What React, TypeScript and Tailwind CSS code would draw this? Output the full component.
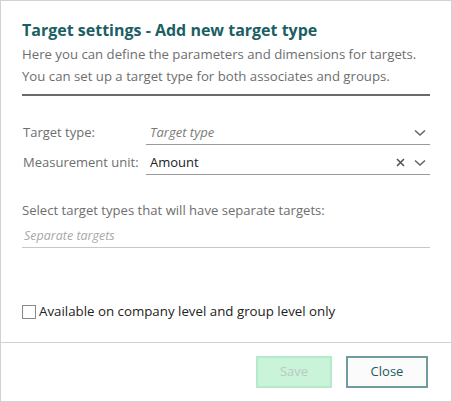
import React from "react";

function Chevron() {
  return (
    <svg width="12" height="8" viewBox="0 0 12 8" fill="none">
      <path d="M1 1.5 L6 6 L11 1.5" stroke="#666" strokeWidth="1.6" />
    </svg>
  );
}

function Cross() {
  return (
    <svg width="9" height="9" viewBox="0 0 9 9" fill="none">
      <path d="M1 1 L8 8 M8 1 L1 8" stroke="#555" strokeWidth="1.6" />
    </svg>
  );
}

export default function App() {
  return (
    <div
      className="w-[452px] h-[402px] border border-[#d2d2d2] bg-white flex flex-col"
      style={{ fontFamily: '"Open Sans", sans-serif' }}
    >
      <div className="px-[21px] pt-[17px]">
        <div className="text-[16px] leading-[24px] font-bold text-[#1b5f64]">
          Target settings - Add new target type
        </div>
        <div className="text-[13.2px] leading-[22px] text-[#6e6e6e] mt-[1px]">
          <div>Here you can define the parameters and dimensions for targets.</div>
          <div>You can set up a target type for both associates and groups.</div>
        </div>
        <div className="h-[2px] bg-[#6a6a6a] mt-[7px]" />
      </div>

      <div className="px-[21px] pt-[25px] flex-1">
        <div className="flex items-end h-[24px]">
          <div className="w-[124px] text-[13px] text-[#6e6e6e] pb-[3px] pl-[1px]">Target type:</div>
          <div className="flex-1 flex items-center justify-between border-b border-[#9a9a9a] h-[24px] pl-[4px] pr-[4px]">
            <span className="text-[13px] italic text-[#7a7a7a]">Target type</span>
            <Chevron />
          </div>
        </div>
        <div className="flex items-end h-[24px] mt-[6px]">
          <div className="w-[124px] text-[13px] text-[#6e6e6e] pb-[3px] pl-[1px]">Measurement unit:</div>
          <div className="flex-1 flex items-center justify-between border-b border-[#9a9a9a] h-[24px] pl-[4px] pr-[4px]">
            <span className="text-[13px] text-[#222]">Amount</span>
            <div className="flex items-center gap-[9px]">
              <Cross />
              <Chevron />
            </div>
          </div>
        </div>

        <div className="text-[13.1px] text-[#6e6e6e] mt-[25px] leading-[20px]">
          Select target types that will have separate targets:
        </div>
        <div className="border-b border-[#c8c8c8] h-[26px] flex items-end pl-[2px] pb-[2px] mt-[2px]">
          <span className="text-[12.5px] leading-[18px] italic text-[#a8a8a8]">Separate targets</span>
        </div>

        <div className="flex items-center mt-[54px]">
          <div className="w-[14px] h-[14px] border border-[#8a8a8a] bg-white" />
          <span className="text-[13.3px] text-[#222] ml-[3px]">
            Available on company level and group level only
          </span>
        </div>
      </div>

      <div className="border-t border-[#cdd3d3] h-[59px] flex items-start justify-end gap-[14px] pt-[13px] pr-[23px]">
        <button className="w-[76px] h-[32px] bg-[#c9f4d9] border-2 border-[#b4eac8] text-[13px] text-[#bcc8c0]">
          Save
        </button>
        <button className="w-[82px] h-[32px] bg-[#fbfbfb] border-2 border-[#6f9c9c] text-[13px] text-[#1d5a60]">
          Close
        </button>
      </div>
    </div>
  );
}
